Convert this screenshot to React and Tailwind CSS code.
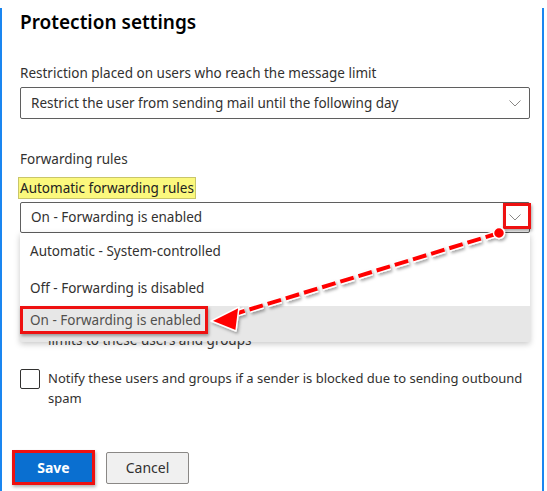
import React from 'react';

const Chevron = () => (
  <svg width="12" height="7" viewBox="0 0 12 7" className="shrink-0">
    <polyline points="0.5,0.5 6,6 11.5,0.5" fill="none" stroke="#8a8886" strokeWidth="1" />
  </svg>
);

const Arrow = () => (
  <svg width="547" height="491" className="pointer-events-none absolute left-0 top-0 z-30">
    <defs>
      <filter id="sh" x="-20%" y="-20%" width="140%" height="140%">
        <feDropShadow dx="1.5" dy="2" stdDeviation="1.5" floodColor="#000" floodOpacity="0.35" />
      </filter>
    </defs>
    <g filter="url(#sh)">
      <line x1="499" y1="233" x2="238" y2="313" stroke="#fff" strokeWidth="7" strokeDasharray="14 5" strokeLinecap="butt" />
      <line x1="499" y1="233" x2="238" y2="313" stroke="#f00" strokeWidth="4" strokeDasharray="14 5" />
      <polygon points="211,321 239,307 236,331" fill="#f00" stroke="#fff" strokeWidth="1.5" strokeLinejoin="round" />
      <circle cx="499" cy="233" r="5.5" fill="#f00" stroke="#fff" strokeWidth="1.5" />
    </g>
  </svg>
);

export default function App() {
  return (
    <div className="relative h-[491px] w-[547px] overflow-hidden bg-white font-['Noto_Sans',sans-serif] text-[13.5px] text-[#323130]">
      <div className="h-[491px] w-[544px] border-x-2 border-b-2 border-[#1a86f0] pl-[18px] pr-[12px]">
        {/* Header */}
        <h1 className="mt-[8px] text-[19px] font-semibold leading-[28px] text-black">Protection settings</h1>

        {/* Message limit restriction */}
        <p className="mt-[27px] leading-[20px]">Restriction placed on users who reach the message limit</p>
        <div className="mt-[4px] flex h-[32px] items-center justify-between rounded-[2px] border border-[#5f5f5f] pl-[10px] pr-[8px]">
          <span>Restrict the user from sending mail until the following day</span>
          <Chevron />
        </div>

        {/* Forwarding */}
        <p className="mt-[30px] leading-[20px]">Forwarding rules</p>
        <div className="mt-[8px]">
          <span className="-ml-[2px] inline-block h-[22px] border border-[#c9c66a] bg-[#fbf87d] px-[1px] leading-[20px] text-[#222]">
            Automatic forwarding rules
          </span>
        </div>
        <div className="relative mt-[3px]">
          <div className="flex h-[31px] items-center justify-between rounded-[2px] border border-[#5f5f5f] pl-[10px] pr-[8px]">
            <span>On - Forwarding is enabled</span>
            <Chevron />
          </div>
          {/* chevron callout */}
          <div className="absolute right-[-1px] top-[1px] z-20 h-[26px] w-[28px] border-[3px] border-[#ee1111] shadow-[1px_2px_3px_rgba(0,0,0,0.35)]" />

          {/* Open dropdown */}
          <div className="absolute left-0 right-0 top-full z-10 bg-white shadow-[0_2px_6px_rgba(0,0,0,0.22)]">
            <div className="flex h-[37px] items-center pl-[10px]">Automatic - System-controlled</div>
            <div className="flex h-[36px] items-center pl-[10px]">Off - Forwarding is disabled</div>
            <div className="flex h-[36px] items-start bg-[#e7e7e7]">
              <span className="flex h-[28px] w-[188px] items-center whitespace-nowrap border-[3px] border-[#ee1111] pl-[7px] text-[#52504e] shadow-[1px_2px_3px_rgba(0,0,0,0.35)]">
                On - Forwarding is enabled
              </span>
            </div>
          </div>
        </div>
        <p className="relative z-20 ml-[28px] mt-[97px] leading-[20px] [clip-path:inset(55%_0_0_0)]">limits to these users and groups</p>

        {/* Notify checkbox */}
        <div className="mt-[18px] flex gap-[8px]">
          <span className="mt-[1px] h-[20px] w-[20px] shrink-0 rounded-[2px] border border-[#323130]" />
          <span className="text-[13px] leading-[20px]">Notify these users and groups if a sender is blocked due to sending outbound spam</span>
        </div>

        {/* Footer buttons */}
        <div className="mt-[42px] flex items-center gap-[11px]">
          <button className="-ml-[8px] h-[35px] w-[83px] border-[3px] border-[#ee1111] bg-[#0a6fd0] text-[14px] font-bold text-white shadow-[1px_2px_3px_rgba(0,0,0,0.3)]">
            Save
          </button>
          <button className="h-[32px] w-[83px] rounded-[2px] border border-[#8a8886] bg-[#f0f0f0] text-[14px] text-[#323130]">
            Cancel
          </button>
        </div>
      </div>
      <Arrow />
    </div>
  );
}
